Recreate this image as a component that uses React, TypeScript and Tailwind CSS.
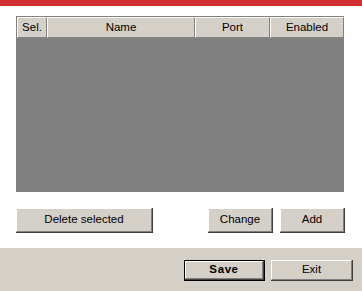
import React from "react";

const font = { fontFamily: '"Liberation Sans", Arial, sans-serif' };

function HeaderCell({ label, w }: { label: string; w: string }) {
  return (
    <div
      className={`${w} h-full flex items-center justify-center bg-[#d4d0c8] border-t border-l border-t-white border-l-white border-r border-b border-r-[#808080] border-b-[#808080] text-[11.5px] text-black leading-none`}
    >
      {label}
    </div>
  );
}

function Btn({ label, w, bold }: { label: string; w: string; bold?: boolean }) {
  return (
    <div className={`${w} h-full border-r border-b border-r-[#404040] border-b-[#404040]`}>
      <div className="w-full h-full flex items-center justify-center bg-[#d4d0c8] border-t border-l border-t-white border-l-white border-r border-b border-r-[#808080] border-b-[#808080] text-[11.5px] text-black leading-none">
        <span className={bold ? "font-bold tracking-[0.6px]" : ""}>{label}</span>
      </div>
    </div>
  );
}

export default function App() {
  return (
    <div className="w-[362px] h-[291px] bg-white flex flex-col" style={font}>
      <div className="h-[6px] bg-[#cf3030] shrink-0" />
      <div className="ml-[16px] mt-[10px] w-[328px] h-[176px] bg-[#808080] border-t border-l border-[#808080] flex flex-col shrink-0">
        <div className="h-[21px] flex shrink-0">
          <HeaderCell label="Sel." w="w-[30px]" />
          <HeaderCell label="Name" w="w-[148px]" />
          <HeaderCell label="Port" w="w-[75px]" />
          <HeaderCell label="Enabled" w="w-[74px]" />
        </div>
      </div>
      <div className="mt-[16px] h-[25px] flex shrink-0 pl-[16px]">
        <Btn label="Delete selected" w="w-[137px]" />
        <div className="w-[55px]" />
        <Btn label="Change" w="w-[65px]" />
        <div className="w-[7px]" />
        <Btn label="Add" w="w-[65px]" />
      </div>
      <div className="mt-[15px] flex-1 bg-[#d4d0c8] pt-[12px] pl-[184px] flex">
        <div className="w-[81px] h-[21px] border border-black">
          <Btn label="Save" w="w-full" bold />
        </div>
        <div className="w-[6px]" />
        <div className="h-[21px] w-[82px]">
          <Btn label="Exit" w="w-full" />
        </div>
      </div>
    </div>
  );
}
